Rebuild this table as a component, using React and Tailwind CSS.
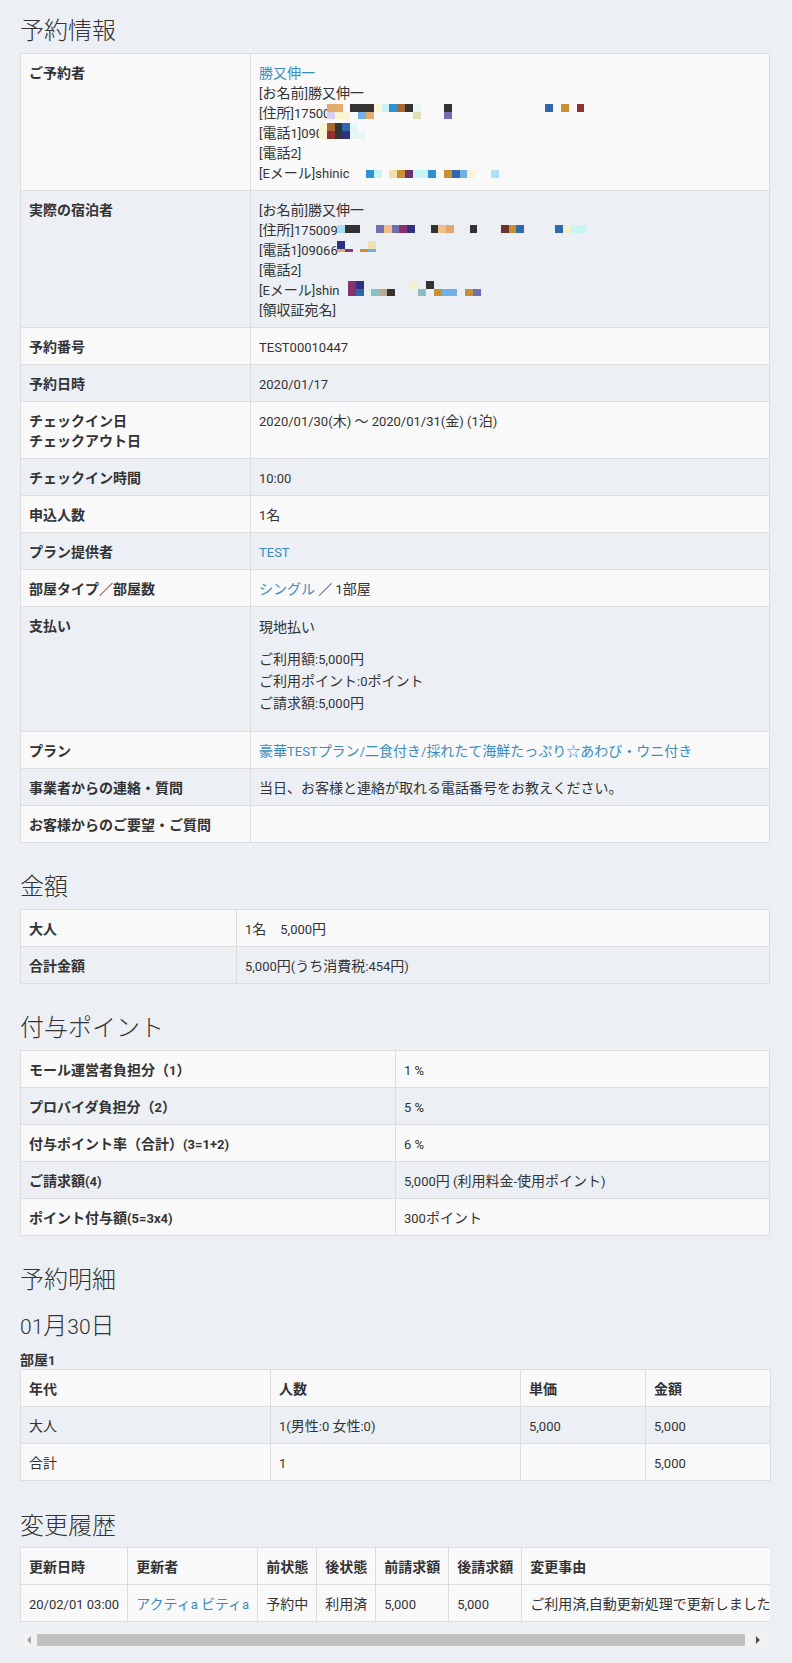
import React from 'react';

const SWATCH = {
  a: 'bg-[#e4ac6c]',
  d: 'bg-[#333333]',
  c: 'bg-[#f8f4d4]',
  y: 'bg-[#c8f4f4]',
  b: 'bg-[#3090d0]',
  r: 'bg-[#a86830]',
  l: 'bg-[#e4f6f6]',
  B: 'bg-[#3068b0]',
  o: 'bg-[#c89030]',
  R: 'bg-[#903030]',
  v: 'bg-[#d8ccf4]',
  s: 'bg-[#70b0e8]',
  k: 'bg-[#e0e0b0]',
  p: 'bg-[#7070b0]',
  n: 'bg-[#303080]',
  m: 'bg-[#883070]',
  P: 'bg-[#703070]',
  e: 'bg-[#f0e0b0]',
  t: 'bg-[#88c0c8]',
  g: 'bg-[#c0a890]',
  w: 'bg-[#b0e0f8]',
  q: 'bg-[#a8dcf0]',
  T: 'bg-[#f0c088]',
  u: 'bg-[#e0a870]',
  D: 'bg-[#703030]',
  f: 'bg-[#f0f0d0]',
  '.': 'bg-transparent',
};

const LATIN = "font-['Roboto',sans-serif] text-[13px] leading-none";
const LATIN_BIG = "font-['Roboto',sans-serif] text-[21px] leading-none";

// 英数字だけ細めのフォントにする
function mix(node, latin = LATIN) {
  if (typeof node !== 'string') return node;
  return node.split(/([ -~]+)/).map((part, i) =>
    /^[ -~]+$/.test(part) ? (
      <span key={i} className={latin}>
        {part}
      </span>
    ) : (
      part
    )
  );
}

function T({ children, latin }) {
  return <>{React.Children.map(children, (c) => mix(c, latin))}</>;
}

// 個人情報のモザイク
function Mosaic({ rows, className }) {
  return (
    <span className={`absolute flex flex-col ${className}`}>
      {rows.map((row, i) => (
        <span key={i} className="flex">
          {row.c.split('').map((ch, j) => (
            <span key={j} className={`w-[7.8px] ${row.h} ${SWATCH[ch]}`} />
          ))}
        </span>
      ))}
    </span>
  );
}

const CELL = 'border border-[#dddddd] px-[8px] py-[8px] align-top leading-[20px] text-left';

function A({ children }) {
  return (
    <span className="text-[#3c8dbc]">
      <T>{children}</T>
    </span>
  );
}

function Line({ children, className = '' }) {
  return (
    <div className={className}>
      <T>{children}</T>
    </div>
  );
}

function Th({ children, className = '' }) {
  return (
    <td className={`${CELL} font-bold ${className}`}>
      <T>{children}</T>
    </td>
  );
}

function Td({ children, className = '' }) {
  return (
    <td className={`${CELL} ${className}`}>
      <T>{children}</T>
    </td>
  );
}

function Row({ odd, children }) {
  return <tr className={odd ? 'bg-[#f9f9f9]' : ''}>{children}</tr>;
}

function Heading({ children, className = '' }) {
  return (
    <h3 className={`text-[24px] leading-[26px] font-light text-[#333333] ${className}`}>
      <T latin={LATIN_BIG}>{children}</T>
    </h3>
  );
}

export default function App() {
  return (
    <div className="min-h-[1663px] bg-[#ecf0f5] px-[20px] pt-[16px] pb-[16px] font-['Noto_Sans_CJK_JP',sans-serif] text-[14px] text-[#333333]">

      {/* 予約情報 */}
      <Heading className="mb-[11px]">予約情報</Heading>
      <table className="w-[750px] table-fixed border-collapse">
        <tbody>
          <Row odd>
            <Th className="w-[230px]">ご予約者</Th>
            <Td>
              <div>
                <A>勝又伸一</A>
              </div>
              <Line>[お名前]勝又伸一</Line>
              <Line className="relative">
                [住所]17500
                <Mosaic
                  className="left-[68px] top-[2px]"
                  rows={[
                    { c: 'aa.dddcybrdl...d............B.o.R', h: 'h-[7.5px]' },
                    { c: 'vcc.sa.....k...p', h: 'h-[7px]' },
                  ]}
                />
              </Line>
              <Line className="relative">
                [電話1]090
                <Mosaic
                  className="left-[60px] top-[1px]"
                  rows={[
                    { c: 'crdBl', h: 'h-[8px]' },
                    { c: 'cRdnll', h: 'h-[8px]' },
                  ]}
                />
              </Line>
              <Line>[電話2]</Line>
              <Line className="relative">
                [Eメール]shinic
                <Mosaic className="left-[107px] top-[8px]" rows={[{ c: 'by.eoPyyb.oBsc..w', h: 'h-[8px]' }]} />
              </Line>
            </Td>
          </Row>
          <Row>
            <Th>実際の宿泊者</Th>
            <Td>
              <Line>[お名前]勝又伸一</Line>
              <Line className="relative">
                [住所]175009
                <Mosaic className="left-[78px] top-[6px]" rows={[{ c: 'qdd..pTpmn..dTu..d...DoB....Bfyy', h: 'h-[8px]' }]} />
              </Line>
              <Line className="relative">
                [電話1]09066
                <Mosaic
                  className="left-[78px] top-[2px]"
                  rows={[
                    { c: 'nl..e', h: 'h-[8px]' },
                    { c: 'um.os', h: 'h-[2.5px]' },
                  ]}
                />
              </Line>
              <Line>[電話2]</Line>
              <Line className="relative">
                [Eメール]shin
                <Mosaic
                  className="left-[89px] top-[2px]"
                  rows={[
                    { c: 'mn......f.d', h: 'h-[8px]' },
                    { c: 'mB.tgd...t.oss.op', h: 'h-[7px]' },
                  ]}
                />
              </Line>
              <Line>[領収証宛名]</Line>
            </Td>
          </Row>
          <Row odd>
            <Th>予約番号</Th>
            <Td>TEST00010447</Td>
          </Row>
          <Row>
            <Th>予約日時</Th>
            <Td>2020/01/17</Td>
          </Row>
          <Row odd>
            <Th>
              チェックイン日
              <br />
              チェックアウト日
            </Th>
            <Td>2020/01/30(木) ～ 2020/01/31(金) (1泊)</Td>
          </Row>
          <Row>
            <Th>チェックイン時間</Th>
            <Td>10:00</Td>
          </Row>
          <Row odd>
            <Th>申込人数</Th>
            <Td>1名</Td>
          </Row>
          <Row>
            <Th>プラン提供者</Th>
            <Td>
              <A>TEST</A>
            </Td>
          </Row>
          <Row odd>
            <Th>部屋タイプ／部屋数</Th>
            <Td>
              <A>シングル</A>
              {' ／ 1部屋'}
            </Td>
          </Row>
          <Row>
            <Th>支払い</Th>
            <Td>
              <p className="mb-[10px] leading-[22px]">現地払い</p>
              <div className="mb-[10px] leading-[22px]">
                <Line>ご利用額:5,000円</Line>
                <Line>ご利用ポイント:0ポイント</Line>
                <Line>ご請求額:5,000円</Line>
              </div>
            </Td>
          </Row>
          <Row odd>
            <Th>プラン</Th>
            <Td>
              <A>豪華TESTプラン/二食付き/採れたて海鮮たっぷり☆あわび・ウニ付き</A>
            </Td>
          </Row>
          <Row>
            <Th>事業者からの連絡・質問</Th>
            <Td>当日、お客様と連絡が取れる電話番号をお教えください。</Td>
          </Row>
          <Row odd>
            <Th>お客様からのご要望・ご質問</Th>
            <Td></Td>
          </Row>
        </tbody>
      </table>

      {/* 金額 */}
      <Heading className="mt-[29px] mb-[11px]">金額</Heading>
      <table className="w-[750px] table-fixed border-collapse">
        <tbody>
          <Row odd>
            <Th className="w-[216px]">大人</Th>
            <Td>1名　5,000円</Td>
          </Row>
          <Row>
            <Th>合計金額</Th>
            <Td>5,000円(うち消費税:454円)</Td>
          </Row>
        </tbody>
      </table>

      {/* 付与ポイント */}
      <Heading className="mt-[29px] mb-[11px]">付与ポイント</Heading>
      <table className="w-[750px] table-fixed border-collapse">
        <tbody>
          <Row odd>
            <Th className="w-[375px]">モール運営者負担分（1）</Th>
            <Td>1 %</Td>
          </Row>
          <Row>
            <Th>プロバイダ負担分（2）</Th>
            <Td>5 %</Td>
          </Row>
          <Row odd>
            <Th>付与ポイント率（合計）(3=1+2)</Th>
            <Td>6 %</Td>
          </Row>
          <Row>
            <Th>ご請求額(4)</Th>
            <Td>5,000円 (利用料金-使用ポイント)</Td>
          </Row>
          <Row odd>
            <Th>ポイント付与額(5=3x4)</Th>
            <Td>300ポイント</Td>
          </Row>
        </tbody>
      </table>

      {/* 予約明細 */}
      <Heading className="mt-[29px]">予約明細</Heading>
      <Heading className="mt-[20px]">01月30日</Heading>
      <Line className="mt-[11px] font-bold leading-[20px]">部屋1</Line>
      <table className="w-[750px] table-fixed border-collapse">
        <tbody>
          <Row odd>
            <Th className="w-[250px]">年代</Th>
            <Th className="w-[250px]">人数</Th>
            <Th className="w-[125px]">単価</Th>
            <Th className="w-[125px]">金額</Th>
          </Row>
          <Row>
            <Td>大人</Td>
            <Td>1(男性:0 女性:0)</Td>
            <Td>5,000</Td>
            <Td>5,000</Td>
          </Row>
          <Row odd>
            <Td>合計</Td>
            <Td>1</Td>
            <Td></Td>
            <Td>5,000</Td>
          </Row>
        </tbody>
      </table>

      {/* 変更履歴 */}
      <Heading className="mt-[30px] mb-[10px]">変更履歴</Heading>
      <div className="w-[750px] overflow-hidden">
        <table className="border-collapse whitespace-nowrap">
          <tbody>
            <Row odd>
              <Th>更新日時</Th>
              <Th>更新者</Th>
              <Th>前状態</Th>
              <Th>後状態</Th>
              <Th>前請求額</Th>
              <Th>後請求額</Th>
              <Th>変更事由</Th>
            </Row>
            <Row odd>
              <Td>20/02/01 03:00</Td>
              <Td>
                <A>アクティa ビティa</A>
              </Td>
              <Td>予約中</Td>
              <Td>利用済</Td>
              <Td>5,000</Td>
              <Td>5,000</Td>
              <Td>ご利用済,自動更新処理で更新しました。</Td>
            </Row>
          </tbody>
        </table>
      </div>

      {/* 横スクロールバー */}
      <div className="mt-[11px] flex h-[14px] w-[750px] items-center bg-[#f1f1f1]">
        <div className="flex w-[17px] justify-center">
          <div className="h-0 w-0 border-y-[4px] border-r-[4px] border-y-transparent border-r-[#a3a3a3]" />
        </div>
        <div className="h-[12px] w-[708px] bg-[#c1c1c1]" />
        <div className="flex flex-1 justify-center">
          <div className="h-0 w-0 border-y-[4px] border-l-[4px] border-y-transparent border-l-[#505050]" />
        </div>
      </div>
    </div>
  );
}
